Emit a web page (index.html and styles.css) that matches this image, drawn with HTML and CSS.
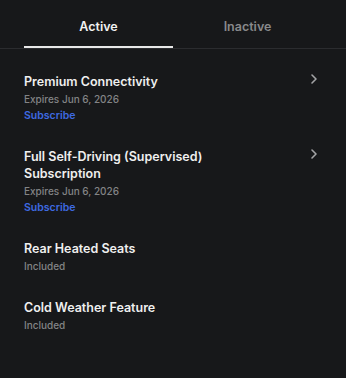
FILE: index.html
```html
<!DOCTYPE html>
<html>
<head>
<meta charset="utf-8">
<link rel="stylesheet" href="styles.css">
</head>
<body>
<div class="screen">
  <div class="tabs">
    <div class="tab active">Active</div>
    <div class="tab">Inactive</div>
  </div>
  <div class="list">
    <div class="item">
      <div class="info">
        <div class="title">Premium Connectivity</div>
        <div class="sub">Expires Jun 6, 2026</div>
        <div class="link">Subscribe</div>
      </div>
      <svg class="chev" width="8" height="12" viewBox="0 0 8 12"><path d="M2 2 L6 6 L2 10" fill="none" stroke="#a3a4a6" stroke-width="1.6" stroke-linecap="round" stroke-linejoin="round"/></svg>
    </div>
    <div class="item">
      <div class="info">
        <div class="title">Full Self-Driving (Supervised)<br>Subscription</div>
        <div class="sub">Expires Jun 6, 2026</div>
        <div class="link">Subscribe</div>
      </div>
      <svg class="chev" width="8" height="12" viewBox="0 0 8 12"><path d="M2 2 L6 6 L2 10" fill="none" stroke="#a3a4a6" stroke-width="1.6" stroke-linecap="round" stroke-linejoin="round"/></svg>
    </div>
    <div class="item">
      <div class="info">
        <div class="title">Rear Heated Seats</div>
        <div class="sub">Included</div>
      </div>
    </div>
    <div class="item">
      <div class="info">
        <div class="title">Cold Weather Feature</div>
        <div class="sub">Included</div>
      </div>
    </div>
  </div>
</div>
</body>
</html>
```

FILE: styles.css
```css
html, body {
  margin: 0;
  padding: 0;
  background: #17181a;
}
.screen {
  width: 346px;
  height: 378px;
  background: #17181a;
  font-family: Inter, "Liberation Sans", sans-serif;
  color: #ececec;
}
.tabs {
  display: flex;
  padding: 0 24px;
  border-bottom: 1px solid #2b2c2f;
  height: 48px;
}
.tab {
  flex: 1;
  display: flex;
  align-items: center;
  justify-content: center;
  font-size: 12.5px;
  font-weight: 600;
  color: #88898b;
  padding-top: 7px;
  padding-bottom: 2px;
  box-sizing: border-box;
}
.tab.active {
  color: #f2f2f2;
  border-bottom: 2px solid #e8e8e8;
  padding-bottom: 0;
}
.list {
  padding-top: 12px;
}
.item {
  display: flex;
  justify-content: space-between;
  align-items: flex-start;
  padding: 12px 28px 12px 24px;
}
.title {
  font-size: 12.5px;
  font-weight: 600;
  line-height: 17px;
  color: #efefef;
  margin-bottom: 1px;
}
.sub {
  font-size: 10px;
  font-weight: 500;
  line-height: 17px;
  color: #838486;
}
.link {
  font-size: 10.5px;
  font-weight: 600;
  line-height: 16px;
  color: #3e6ae1;
}
.chev {
  margin-top: 0px;
}
```
